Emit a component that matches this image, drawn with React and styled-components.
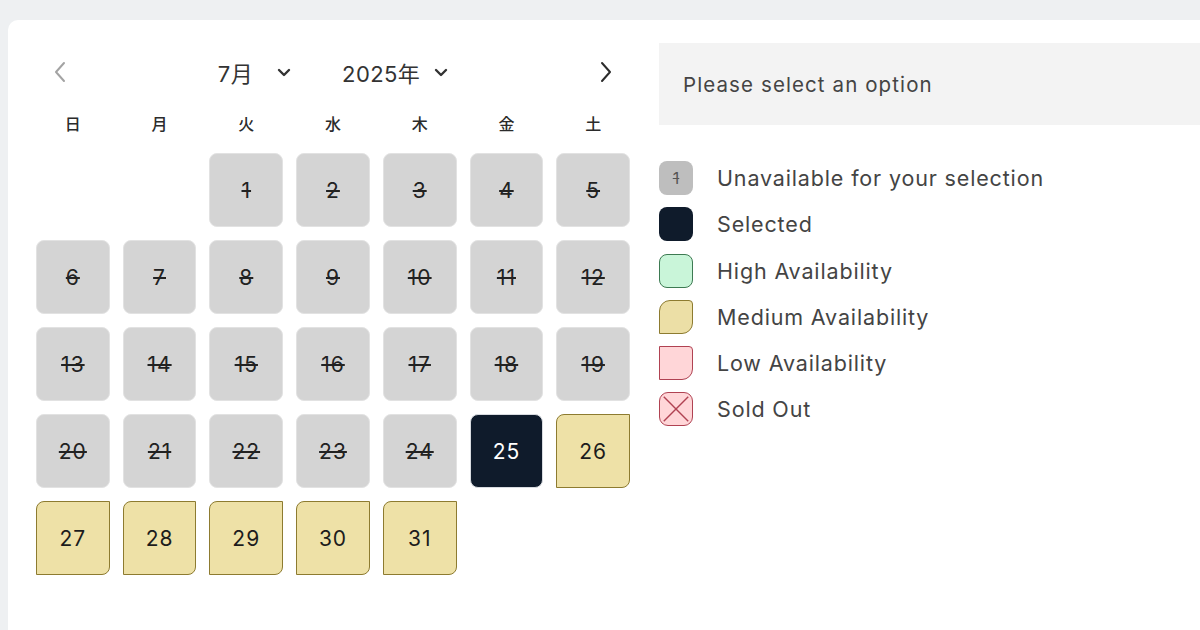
import styled, { createGlobalStyle, css } from 'styled-components';

const GlobalStyle = createGlobalStyle`
  html, body {
    margin: 0;
    padding: 0;
    background: #eef0f2;
    overflow: hidden;
  }
  body {
    font-family: Inter, "Noto Sans CJK JP", sans-serif;
    color: #333;
  }
`;

const Page = styled.div`
  width: 1200px;
  height: 630px;
  padding: 20px 0 0 8px;
  box-sizing: border-box;
  overflow: hidden;
`;

const Card = styled.div`
  background: #fff;
  border-radius: 10px 0 0 0;
  height: 640px;
  width: 1240px;
  padding: 23px 0 0 28px;
  box-sizing: border-box;
  display: flex;
  align-items: flex-start;
  gap: 29px;
`;

const CalendarWrap = styled.div`
  width: 594px;
  flex-shrink: 0;
  display: flex;
  flex-direction: column;
`;

const Header = styled.div`
  margin-top: 5px;
  height: 48px;
  display: flex;
  align-items: center;
  justify-content: space-between;
`;

const NavButton = styled.button`
  width: 48px;
  height: 48px;
  border: none;
  background: none;
  padding: 0;
  display: flex;
  align-items: center;
  justify-content: center;
  color: ${(p) => (p.$disabled ? '#a3a3a3' : '#2b2b2b')};
  cursor: pointer;
`;

const Selects = styled.div`
  display: flex;
  align-items: center;
  gap: 51px;
`;

const Select = styled.div`
  display: flex;
  align-items: center;
  gap: ${(p) => p.$gap}px;
  font-size: 22px;
  color: #333;
  letter-spacing: 0.4px;
`;

const Weekdays = styled.div`
  margin-top: 16px;
  display: grid;
  grid-template-columns: repeat(7, 1fr);
  column-gap: 13px;
`;

const Weekday = styled.div`
  text-align: center;
  font-size: 16px;
  font-weight: 500;
  line-height: 24px;
  color: #2b2b2b;
`;

const Grid = styled.div`
  margin-top: 17px;
  display: grid;
  grid-template-columns: repeat(7, 1fr);
  gap: 13px;
`;

const dayStyles = {
  unavailable: css`
    background: #d4d4d4;
    border: 1px solid #e2e2e2;
    border-radius: 8px;
    color: #222;
    text-decoration: line-through;
    text-decoration-thickness: 1.5px;
  `,
  selected: css`
    background: #0f1b2b;
    border: 1px solid #d8dbe0;
    border-radius: 8px;
    color: #fff;
  `,
  medium: css`
    background: #eee1a7;
    border: 1px solid #8d7b30;
    border-radius: 8px 0 8px 0;
    color: #1c1c1c;
  `,
};

const Day = styled.div`
  height: 74px;
  box-sizing: border-box;
  display: flex;
  align-items: center;
  justify-content: center;
  font-size: 21px;
  letter-spacing: 1px;
  ${(p) => dayStyles[p.$state]}
`;

const Empty = styled.div``;

const Side = styled.div`
  width: 600px;
  flex-shrink: 0;
  display: flex;
  flex-direction: column;
`;

const SelectBox = styled.div`
  height: 82px;
  background: #f3f3f3;
  display: flex;
  align-items: center;
  padding-left: 24px;
  font-size: 20.5px;
  color: #444;
  letter-spacing: 1.1px;
`;

const Legend = styled.ul`
  list-style: none;
  margin: 36px 0 0;
  padding: 0;
  display: flex;
  flex-direction: column;
  gap: 12.3px;
`;

const LegendRow = styled.li`
  display: flex;
  align-items: center;
  gap: 24px;
  font-size: 21.5px;
  color: #444;
  letter-spacing: 0.85px;
`;

const swatchStyles = {
  unavailable: css`
    background: #bebebe;
    border-radius: 8px;
    color: #555;
    font-size: 16px;
    letter-spacing: 0;
    text-decoration: line-through;
  `,
  selected: css`
    background: #0f1b2b;
    border-radius: 8px;
  `,
  high: css`
    background: #c9f5d9;
    border: 1.5px solid #3d7a52;
    border-radius: 8px;
  `,
  medium: css`
    background: #ecdfa6;
    border: 1.5px solid #8d7b30;
    border-radius: 11px 4px 11px 0;
  `,
  low: css`
    background: #ffd6d8;
    border: 1.5px solid #b04252;
    border-radius: 0 4px 11px 0;
  `,
  sold: css`
    background: #ffd6d8;
    border: 1.5px solid #b04252;
    border-radius: 9px;
    overflow: hidden;
  `,
};

const Swatch = styled.span`
  width: 34px;
  height: 34px;
  box-sizing: border-box;
  display: flex;
  align-items: center;
  justify-content: center;
  flex-shrink: 0;
  ${(p) => swatchStyles[p.$kind]}
`;

const ChevronDown = () => (
  <svg width="14" height="9" viewBox="0 0 14 9" fill="none">
    <path d="M2 2l5 5 5-5" stroke="#333" strokeWidth="2.4" strokeLinecap="round" strokeLinejoin="round" />
  </svg>
);

const ChevronSide = ({ dir }) => (
  <svg width="14" height="22" viewBox="0 0 14 22" fill="none">
    <path
      d={dir === 'left' ? 'M11 2L3 11l8 9' : 'M3 2l8 9-8 9'}
      stroke="currentColor"
      strokeWidth="2"
      strokeLinecap="round"
      strokeLinejoin="round"
    />
  </svg>
);

const Cross = () => (
  <svg width="34" height="34" viewBox="0 0 34 34">
    <path d="M4 4l26 26M30 4L4 30" stroke="#b04252" strokeWidth="1.5" />
  </svg>
);

const weekdays = ['日', '月', '火', '水', '木', '金', '土'];

const days = Array.from({ length: 31 }, (_, i) => {
  const n = i + 1;
  let state = 'unavailable';
  if (n === 25) state = 'selected';
  if (n > 25) state = 'medium';
  return { n, state };
});

const legend = [
  { kind: 'unavailable', label: 'Unavailable for your selection' },
  { kind: 'selected', label: 'Selected' },
  { kind: 'high', label: 'High Availability' },
  { kind: 'medium', label: 'Medium Availability' },
  { kind: 'low', label: 'Low Availability' },
  { kind: 'sold', label: 'Sold Out' },
];

export default function App() {
  return (
    <>
      <GlobalStyle />
      <Page>
        <Card>
          <CalendarWrap>
            <Header>
              <NavButton $disabled aria-label="Previous month">
                <ChevronSide dir="left" />
              </NavButton>
              <Selects>
                <Select $gap={24}>
                  <span>7月</span>
                  <ChevronDown />
                </Select>
                <Select $gap={14}>
                  <span>2025年</span>
                  <ChevronDown />
                </Select>
              </Selects>
              <NavButton aria-label="Next month">
                <ChevronSide dir="right" />
              </NavButton>
            </Header>
            <Weekdays>
              {weekdays.map((w) => (
                <Weekday key={w}>{w}</Weekday>
              ))}
            </Weekdays>
            <Grid>
              <Empty />
              <Empty />
              {days.map((d) => (
                <Day key={d.n} $state={d.state}>
                  {d.n}
                </Day>
              ))}
            </Grid>
          </CalendarWrap>
          <Side>
            <SelectBox>Please select an option</SelectBox>
            <Legend>
              {legend.map((l) => (
                <LegendRow key={l.kind}>
                  <Swatch $kind={l.kind}>
                    {l.kind === 'unavailable' && '1'}
                    {l.kind === 'sold' && <Cross />}
                  </Swatch>
                  {l.label}
                </LegendRow>
              ))}
            </Legend>
          </Side>
        </Card>
      </Page>
    </>
  );
}
